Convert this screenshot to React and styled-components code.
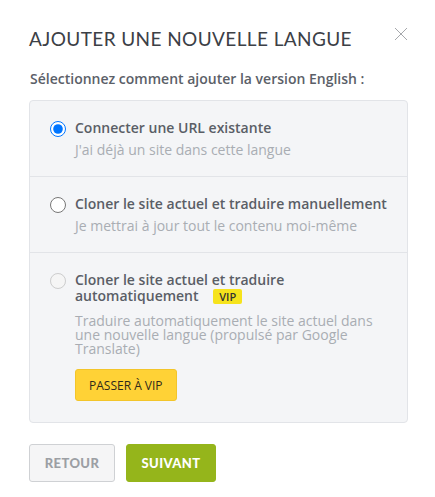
import React from "react";
import styled, { createGlobalStyle } from "styled-components";

const Global = createGlobalStyle`
  html, body { margin: 0; padding: 0; background: #fff; }
  body { font-family: "Open Sans", sans-serif; -webkit-font-smoothing: antialiased; }
  * { box-sizing: border-box; }
`;

const Dialog = styled.div`
  width: 435px;
  padding: 27px 27px 0 29px;
`;

const Header = styled.div`
  display: flex;
  justify-content: space-between;
  align-items: flex-start;
`;

const Title = styled.h1`
  margin: 0;
  font-family: "Lato", sans-serif;
  font-weight: 400;
  font-size: 19px;
  line-height: 24px;
  letter-spacing: 0.4px;
  color: #3c4046;
  text-transform: uppercase;
`;

const Close = styled.button`
  border: 0;
  background: none;
  padding: 0;
  margin-top: -1px;
  width: 14px;
  height: 16px;
  cursor: pointer;
  display: flex;
  align-items: center;
  justify-content: center;
`;

const Subtitle = styled.p`
  margin: 19px 0 0 1px;
  font-size: 14px;
  line-height: 18px;
  font-weight: 600;
  color: #5b6068;
`;

const Box = styled.div`
  margin-top: 12px;
  background: #f4f5f7;
  border: 1px solid #e2e4e8;
  border-radius: 4px;
`;

const Row = styled.label`
  display: flex;
  gap: 9px;
  padding: 20px 20px ${(p) => (p.$last ? 21 : 19)}px 20px;
  & + & { border-top: 1px solid #e2e4e8; }
  cursor: ${(p) => (p.disabled ? "default" : "pointer")};
`;

const Radio = styled.input.attrs({ type: "radio" })`
  width: 16px;
  height: 16px;
  margin: 0;
  flex: none;
`;

const Content = styled.div`
  display: flex;
  flex-direction: column;
  align-items: flex-start;
`;

const OptionTitle = styled.div`
  font-size: 14px;
  line-height: 16px;
  margin-top: -1px;
  font-weight: 600;
  color: #5a5e66;
`;

const Desc = styled.div`
  margin-top: ${(p) => p.$gap || 7}px;
  font-size: 14px;
  line-height: 14px;
  color: #a9adb3;
`;

const Badge = styled.span`
  display: inline-block;
  margin-left: 11px;
  padding: 0 6px;
  height: 15px;
  line-height: 15px;
  border-radius: 2px;
  background: #f6e31c;
  color: #333;
  font-size: 11px;
  font-weight: 600;
`;

const VipButton = styled.button`
  margin-top: 13px;
  height: 32px;
  padding: 0 13px;
  border: 1px solid #f3c52a;
  border-radius: 3px;
  background: #ffd236;
  color: #2f2a1a;
  font-family: "Open Sans", sans-serif;
  font-size: 12px;
  font-weight: 400;
  text-transform: uppercase;
  cursor: pointer;
`;

const Footer = styled.div`
  display: flex;
  gap: 11px;
  margin-top: 21px;
`;

const Button = styled.button`
  width: ${(p) => p.$width}px;
  height: 38px;
  padding: 0;
  border-radius: 3px;
  border: 1px solid ${(p) => (p.$primary ? "#95b51b" : "#cfd1d4")};
  background: ${(p) => (p.$primary ? "#95b51b" : "#f5f5f6")};
  color: ${(p) => (p.$primary ? "#fff" : "#9c9fa4")};
  font-family: "Lato", sans-serif;
  font-weight: 900;
  font-size: 13px;
  letter-spacing: 0.4px;
  text-transform: uppercase;
  cursor: pointer;
`;

export default function App() {
  return (
    <>
      <Global />
      <Dialog>
        <Header>
          <Title>Ajouter une nouvelle langue</Title>
          <Close aria-label="Fermer">
            <svg width="14" height="14" viewBox="0 0 14 14">
              <path d="M1 1 L13 13 M13 1 L1 13" stroke="#a6a8ac" strokeWidth="1" fill="none" />
            </svg>
          </Close>
        </Header>
        <Subtitle>Sélectionnez comment ajouter la version English :</Subtitle>
        <Box>
          <Row>
            <Radio name="mode" defaultChecked />
            <Content>
              <OptionTitle>Connecter une URL existante</OptionTitle>
              <Desc>J'ai déjà un site dans cette langue</Desc>
            </Content>
          </Row>
          <Row>
            <Radio name="mode" />
            <Content>
              <OptionTitle>Cloner le site actuel et traduire manuellement</OptionTitle>
              <Desc>Je mettrai à jour tout le contenu moi-même</Desc>
            </Content>
          </Row>
          <Row disabled $last>
            <Radio name="mode" disabled />
            <Content>
              <OptionTitle>
                Cloner le site actuel et traduire
                <br />
                automatiquement <Badge>VIP</Badge>
              </OptionTitle>
              <Desc $gap={10}>
                Traduire automatiquement le site actuel dans une nouvelle langue (propulsé par Google Translate)
              </Desc>
              <VipButton>Passer à VIP</VipButton>
            </Content>
          </Row>
        </Box>
        <Footer>
          <Button $width={86}>Retour</Button>
          <Button $primary $width={90}>Suivant</Button>
        </Footer>
      </Dialog>
    </>
  );
}
